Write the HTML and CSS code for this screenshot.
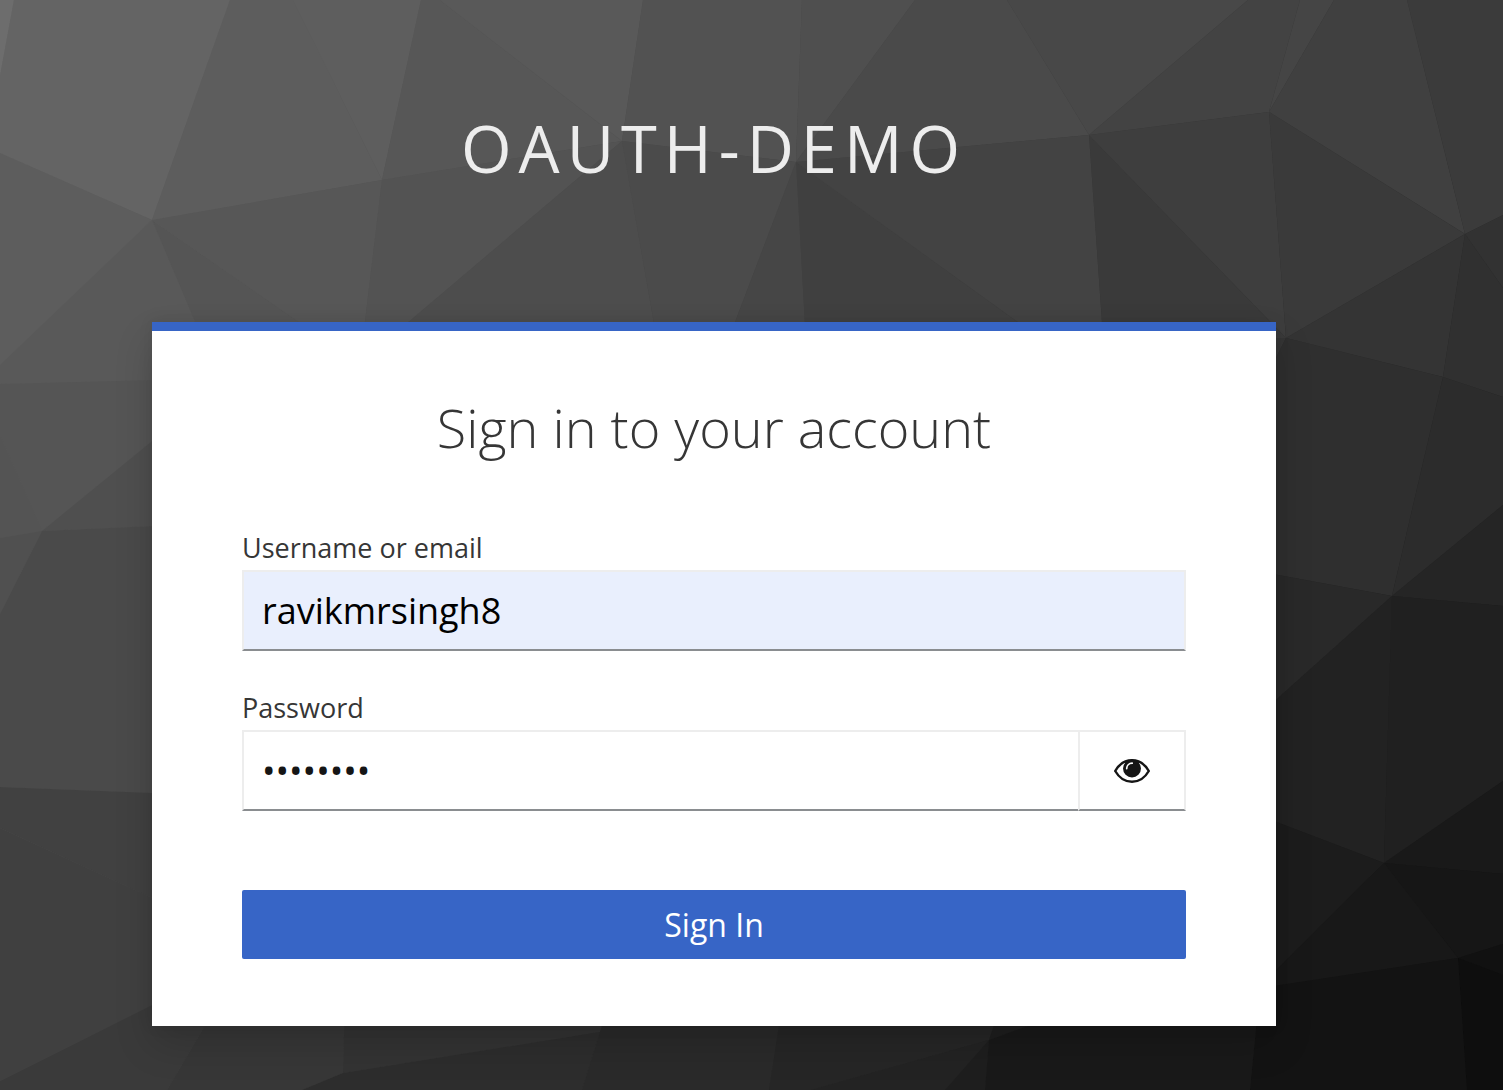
FILE: index.html
```html
<!DOCTYPE html>
<html lang="en">
<head>
<meta charset="utf-8">
<meta name="viewport" content="width=device-width, initial-scale=1">
<title>Sign in to OAUTH-DEMO</title>
<link rel="stylesheet" href="styles.css">
</head>
<body>
<svg class="backdrop" viewBox="0 0 1503 1090" preserveAspectRatio="xMidYMid slice" aria-hidden="true">
  <defs>
    <linearGradient id="shade" gradientUnits="userSpaceOnUse" x1="0" y1="0" x2="1503" y2="1090">
      <stop offset="0" stop-color="#696969"/>
      <stop offset="1" stop-color="#0e0e0e"/>
    </linearGradient>
  </defs>
  <rect width="1503" height="1090" fill="url(#shade)"/>
  <!-- top row of facets -->
  <polygon fill="#6d6d6d" points="0,0 14,0 0,76"/>
  <polygon fill="#646464" points="14,0 230,0 152,220 0,153 0,76"/>
  <polygon fill="#5d5d5d" points="230,0 293,0 382,180 152,220"/>
  <polygon fill="#5e5e5e" points="293,0 421,0 382,180"/>
  <polygon fill="#575757" points="421,0 440,0 622,141 382,180"/>
  <polygon fill="#595959" points="440,0 643,0 622,141"/>
  <polygon fill="#525252" points="643,0 802,0 796,162 622,141"/>
  <polygon fill="#4f4f4f" points="802,0 915,0 796,162"/>
  <polygon fill="#4a4a4a" points="915,0 1007,0 1089,135 796,162"/>
  <polygon fill="#484848" points="1007,0 1248,0 1089,135"/>
  <polygon fill="#434343" points="1248,0 1300,0 1269,112 1089,135"/>
  <polygon fill="#454545" points="1300,0 1334,0 1269,112"/>
  <polygon fill="#404040" points="1334,0 1407,0 1465,234 1269,112"/>
  <polygon fill="#3b3b3b" points="1407,0 1503,0 1503,215 1465,234"/>
  <!-- facets behind the top of the card -->
  <polygon fill="#5d5d5d" points="0,153 152,220 0,365"/>
  <polygon fill="#595959" points="0,365 152,220 220,380 0,384"/>
  <polygon fill="#555555" points="152,220 220,380 382,380"/>
  <polygon fill="#575757" points="152,220 382,180 358,380 382,380"/>
  <polygon fill="#535353" points="382,180 622,141 340,380 358,380"/>
  <polygon fill="#4d4d4d" points="622,141 664,380 340,380"/>
  <polygon fill="#4b4b4b" points="622,141 796,162 713,380 664,380"/>
  <polygon fill="#464646" points="796,162 808,380 713,380"/>
  <polygon fill="#404040" points="796,162 1098,380 808,380"/>
  <polygon fill="#434343" points="796,162 1089,135 1106,380 1098,380"/>
  <polygon fill="#3a3a3a" points="1089,135 1286,338 1106,380"/>
  <polygon fill="#3e3e3e" points="1089,135 1269,112 1286,338"/>
  <polygon fill="#3a3a3a" points="1269,112 1465,234 1286,338"/>
  <!-- right side -->
  <polygon fill="#353535" points="1286,338 1240,430 1240,338"/>
  <polygon fill="#343434" points="1465,234 1443,377 1286,338"/>
  <polygon fill="#323232" points="1465,234 1503,215 1503,288"/>
  <polygon fill="#303030" points="1465,234 1503,288 1503,397 1443,377"/>
  <polygon fill="#2f2f2f" points="1286,338 1443,377 1392,596 1240,568 1240,430"/>
  <polygon fill="#2c2c2c" points="1443,377 1503,397 1503,505 1392,596"/>
  <polygon fill="#252525" points="1392,596 1503,505 1503,606"/>
  <polygon fill="#292929" points="1240,568 1392,596 1240,732"/>
  <polygon fill="#222222" points="1240,732 1392,596 1384,863 1240,808"/>
  <polygon fill="#202020" points="1392,596 1503,606 1503,781 1384,863"/>
  <polygon fill="#191919" points="1384,863 1503,781 1503,874"/>
  <polygon fill="#161616" points="1384,863 1503,874 1503,944 1458,958"/>
  <polygon fill="#1c1c1c" points="1240,808 1384,863 1240,1006"/>
  <polygon fill="#181818" points="1384,863 1458,958 1240,992 1240,1006"/>
  <polygon fill="#111111" points="1458,958 1503,944 1503,975"/>
  <polygon fill="#0e0e0e" points="1458,958 1503,975 1503,1090 1467,1090"/>
  <polygon fill="#131313" points="1260,988 1458,958 1467,1090 1250,1090"/>
  <!-- left side -->
  <polygon fill="#555555" points="0,384 200,379 200,402 42,531 0,435"/>
  <polygon fill="#545454" points="0,435 42,531 0,538"/>
  <polygon fill="#4f4f4f" points="42,531 200,402 200,524"/>
  <polygon fill="#505050" points="42,531 0,538 0,614"/>
  <polygon fill="#4a4a4a" points="42,531 200,524 200,795 0,787 0,614"/>
  <polygon fill="#414141" points="0,787 200,795 200,920 0,828"/>
  <polygon fill="#404040" points="0,828 200,920 200,981 0,1081"/>
  <!-- bottom edge -->
  <polygon fill="#3a3a3a" points="0,1081 200,981 220,1000 167,1090 0,1090"/>
  <polygon fill="#373737" points="220,1000 345,1000 343,1073 302,1090 167,1090"/>
  <polygon fill="#333333" points="345,1000 610,1000 600,1032 343,1073"/>
  <polygon fill="#2d2d2d" points="343,1073 600,1032 582,1090 302,1090"/>
  <polygon fill="#2a2a2a" points="610,1000 783,1000 769,1090 582,1090 600,1032"/>
  <polygon fill="#262626" points="783,1000 1003,1000 989,1040 811,1090 769,1090"/>
  <polygon fill="#232323" points="989,1040 945,1090 811,1090"/>
  <polygon fill="#1e1e1e" points="989,1040 985,1090 945,1090"/>
  <polygon fill="#1f1f1f" points="989,1040 1003,1000 1100,1000"/>
  <polygon fill="#191919" points="989,1040 1100,1000 1260,988 1250,1090 985,1090"/>
</svg>

<div class="page">
  <header class="realm">OAUTH-DEMO</header>

  <main class="card">
    <h1 class="card-title">Sign in to your account</h1>
    <form class="form">
      <div class="field">
        <label class="label" for="username">Username or email</label>
        <input class="input input-filled" id="username" name="username" type="text" value="ravikmrsingh8" spellcheck="false">
      </div>
      <div class="field">
        <label class="label" for="password">Password</label>
        <div class="input-group">
          <input class="input" id="password" name="password" type="password" value="password">
          <button class="reveal" type="button" aria-label="Show password">
            <svg class="eye" viewBox="0 0 36 24" aria-hidden="true">
              <path d="M1.200 12C5 5.400 11 1.200 18 1.200S31 5.400 34.800 12C31 18.600 25 22.800 18 22.800S5 18.600 1.200 12Z" fill="none" stroke="#151515" stroke-width="2.400" stroke-linejoin="round"/>
              <circle cx="18" cy="9.500" r="9" fill="#151515"/>
              <path d="M12.700 9.600C12.700 6.500 15 4.200 18.200 4.200" fill="none" stroke="#fff" stroke-width="1.700" stroke-linecap="round"/>
            </svg>
          </button>
        </div>
      </div>
      <button class="submit" type="submit">Sign In</button>
    </form>
  </main>
</div>
</body>
</html>
```
FILE: styles.css
```css
* {
  box-sizing: border-box;
}

body {
  margin: 0;
  min-height: 100vh;
  position: relative;
  background: #404040;
  color: #363636;
  font-family: "Open Sans", "Noto Sans", sans-serif;
}

.backdrop {
  position: absolute;
  inset: 0;
  width: 100%;
  height: 100%;
}

.page {
  position: relative;
  display: flex;
  flex-direction: column;
  align-items: center;
  padding: 0 75px 64px 0;
}

.realm {
  padding: 108px 20px 134px;
  font-size: 65px;
  line-height: 80px;
  letter-spacing: 7px;
  color: #ededed;
  text-align: center;
}

.card {
  width: 100%;
  max-width: 1124px;
  padding: 56px 90px 67px;
  background: #fff;
  border-top: 9px solid #3765c6;
  box-shadow: 0 18px 36px rgba(3, 3, 3, 0.16), 0 0 14px rgba(3, 3, 3, 0.08);
}

.card-title {
  margin: 0 0 59px;
  font-size: 54px;
  font-weight: 300;
  line-height: 80px;
  text-align: center;
}

.form {
  display: flex;
  flex-direction: column;
  gap: 35px;
}

.field {
  display: flex;
  flex-direction: column;
}

.label {
  font-size: 27px;
  line-height: 44px;
}

.input {
  flex: 1;
  min-width: 0;
  height: 81px;
  min-height: 81px;
  padding: 0 18px;
  border: 2px solid #ededed;
  border-bottom-color: #8a8d90;
  border-radius: 0;
  background: #fff;
  color: #151515;
  font: inherit;
  font-size: 36px;
  outline: none;
}

.input-filled {
  background: #e9effd;
  color: #000;
}

.input-group {
  display: flex;
}

.input-group .input {
  border-right: 0;
}

.reveal {
  display: flex;
  align-items: center;
  justify-content: center;
  width: 108px;
  padding: 0;
  border: 2px solid #ededed;
  border-bottom-color: #8a8d90;
  background: #fff;
}

.eye {
  width: 36px;
  height: 24px;
}

.submit {
  height: 69px;
  margin-top: 44px;
  padding: 0;
  border: 0;
  border-radius: 2px;
  background: #3765c6;
  color: #fff;
  font: inherit;
  font-size: 32px;
}
```
